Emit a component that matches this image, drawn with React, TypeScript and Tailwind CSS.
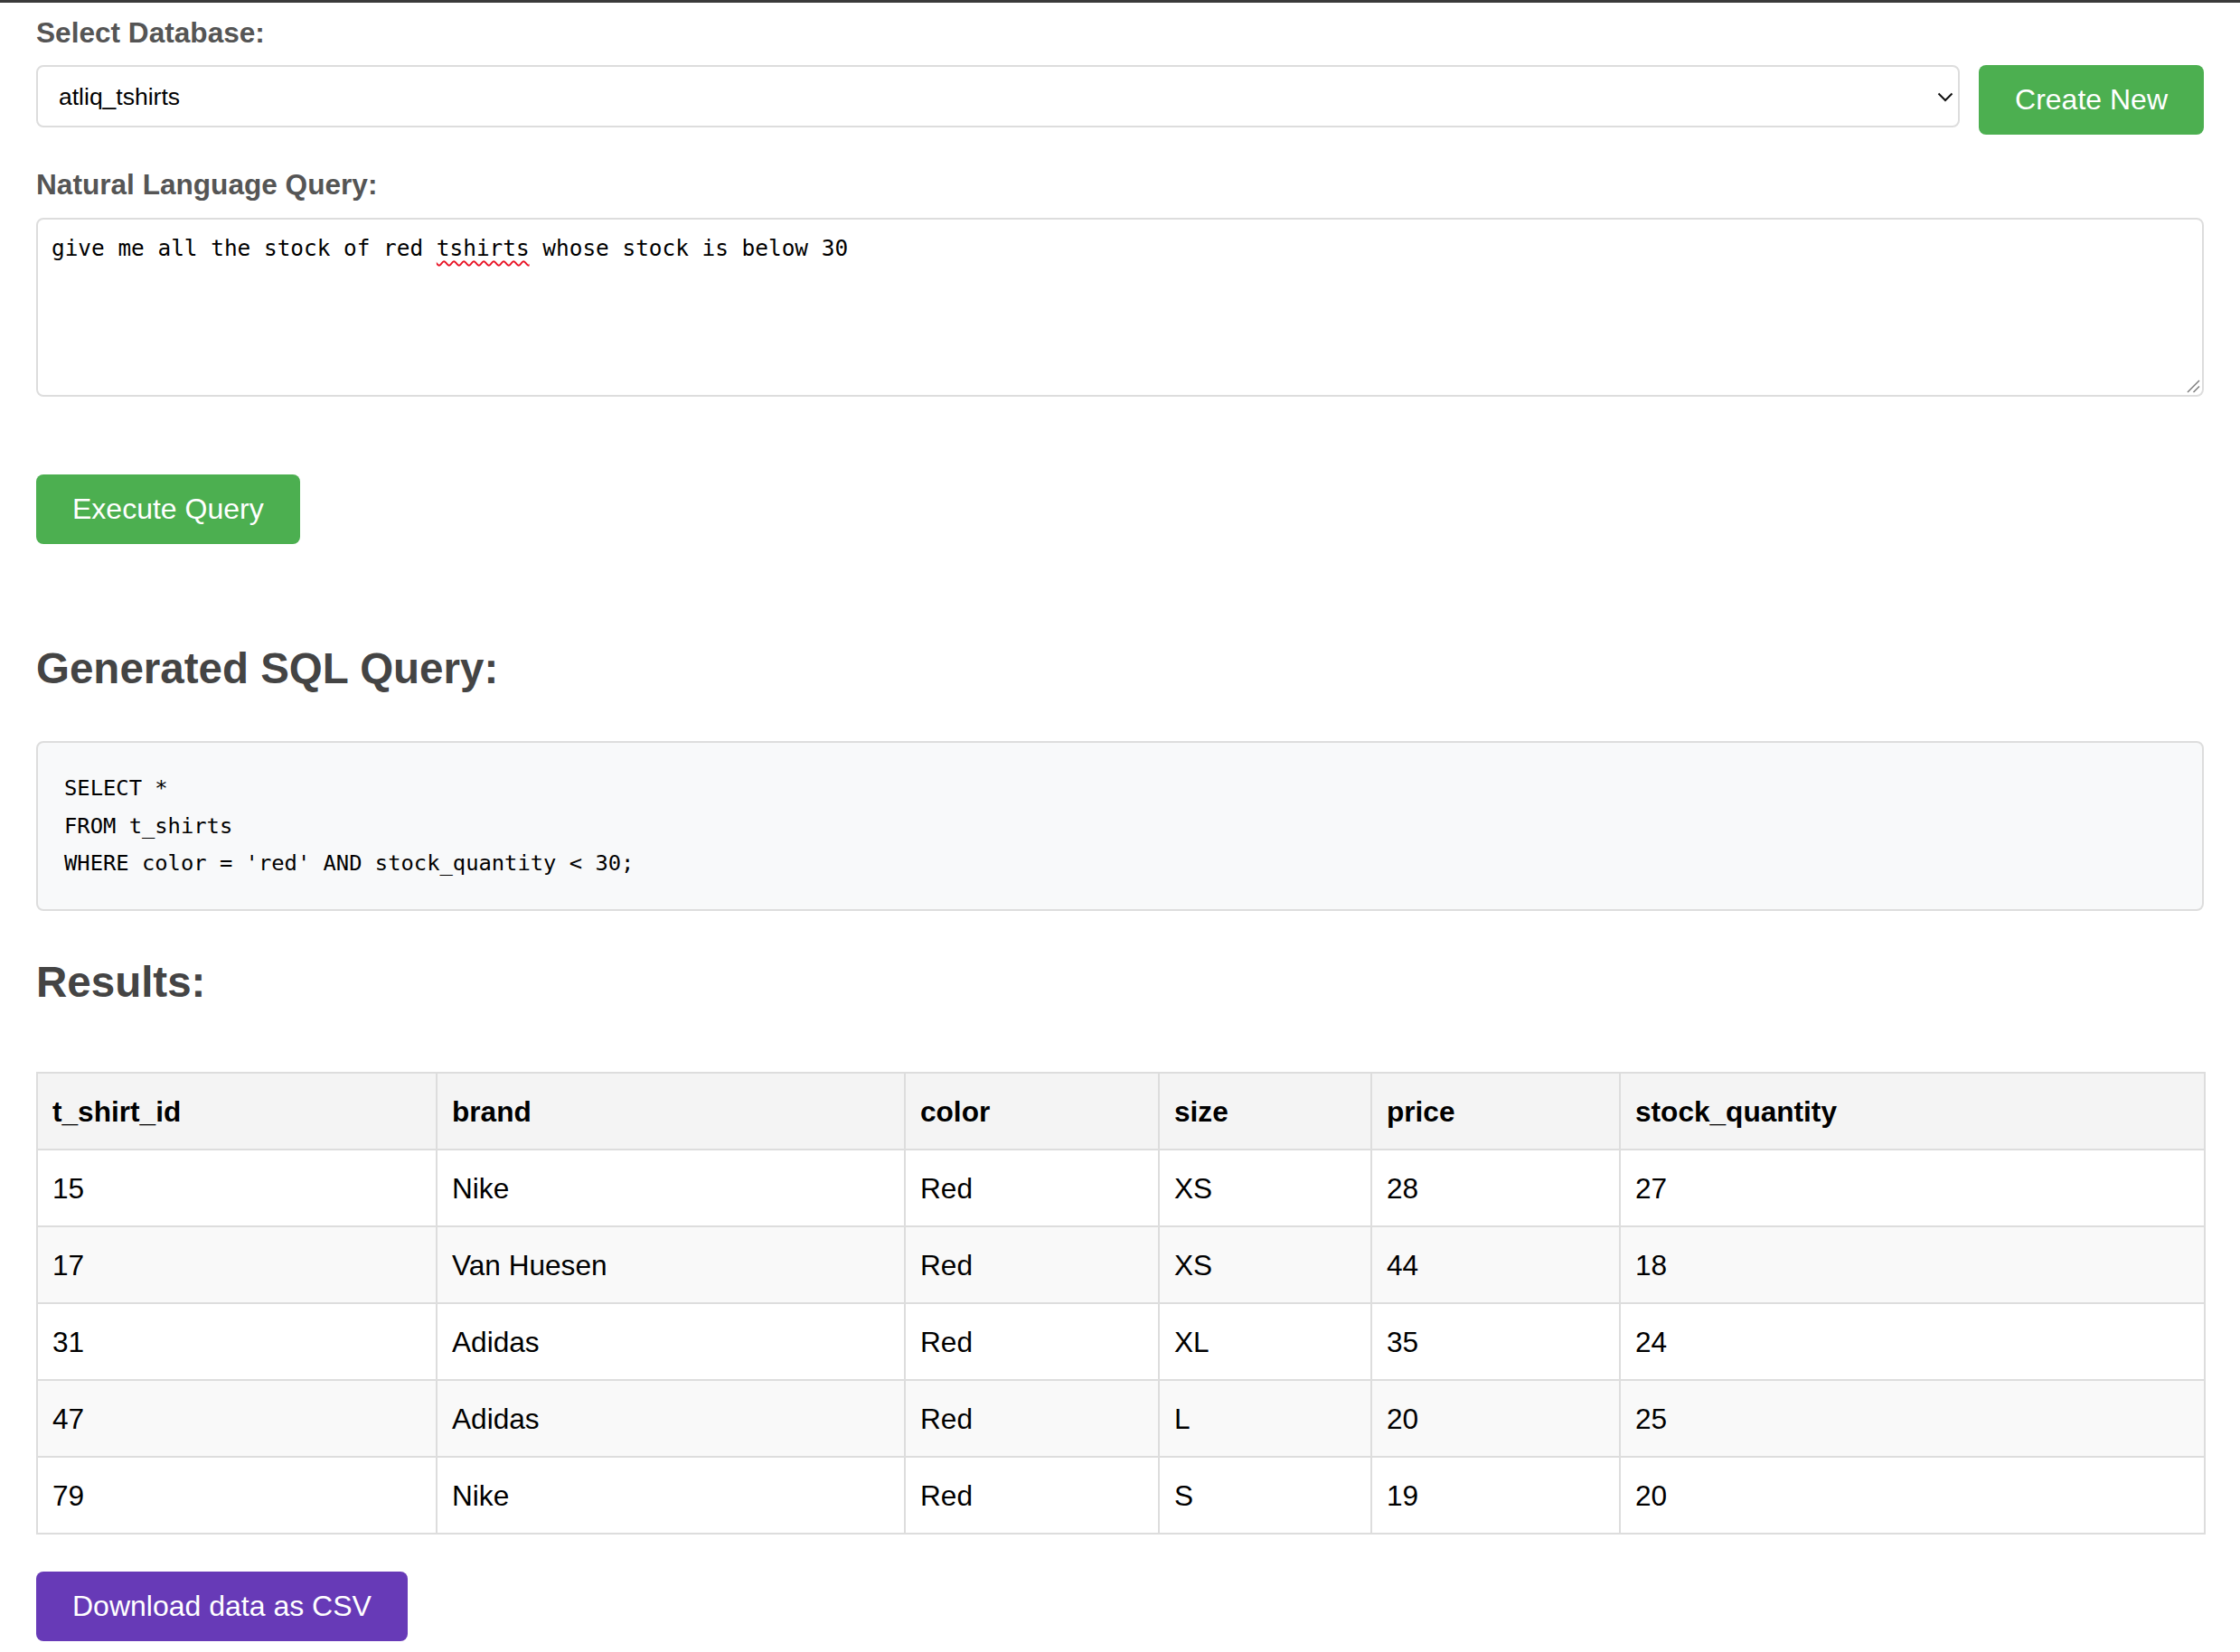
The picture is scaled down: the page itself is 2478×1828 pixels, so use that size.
import React from "react";

interface TShirtRow {
  t_shirt_id: number;
  brand: string;
  color: string;
  size: string;
  price: number;
  stock_quantity: number;
}

const rows: TShirtRow[] = [
  { t_shirt_id: 15, brand: "Nike", color: "Red", size: "XS", price: 28, stock_quantity: 27 },
  { t_shirt_id: 17, brand: "Van Huesen", color: "Red", size: "XS", price: 44, stock_quantity: 18 },
  { t_shirt_id: 31, brand: "Adidas", color: "Red", size: "XL", price: 35, stock_quantity: 24 },
  { t_shirt_id: 47, brand: "Adidas", color: "Red", size: "L", price: 20, stock_quantity: 25 },
  { t_shirt_id: 79, brand: "Nike", color: "Red", size: "S", price: 19, stock_quantity: 20 },
];

const columns: (keyof TShirtRow)[] = [
  "t_shirt_id",
  "brand",
  "color",
  "size",
  "price",
  "stock_quantity",
];

const colWidths = ["w-[442px]", "w-[518px]", "w-[281px]", "w-[235px]", "w-[275px]", "w-[647px]"];

const sqlLines = ["SELECT *", "FROM t_shirts", "WHERE color = 'red' AND stock_quantity < 30;"];

const App: React.FC = () => {
  return (
    <div className="min-h-screen bg-white font-['Liberation_Sans',Arial,sans-serif] text-black">
      <div className="h-[3px] bg-[#3a3a3a]" />

      <div className="px-[40px] pb-[14px]">
        {/* Database picker */}
        <label className="mt-[15px] block text-[31.6px] font-bold leading-[37px] text-[#555555]">
          Select Database:
        </label>
        <div className="mt-[17px] flex items-start gap-[21px]">
          <div className="relative flex-1">
            <select
              defaultValue="atliq_tshirts"
              className="h-[69px] w-full appearance-none rounded-[8px] border-2 border-[#dddddd] bg-white pl-[23px] pt-[2px] text-[26.5px] text-black outline-none"
            >
              <option value="atliq_tshirts">atliq_tshirts</option>
            </select>
            <svg
              className="pointer-events-none absolute right-[7px] top-[30px]"
              width="18"
              height="11"
              viewBox="0 0 18 11"
              fill="none"
            >
              <path d="M1.5 1.5 L9 9 L16.5 1.5" stroke="#111111" strokeWidth="2" />
            </svg>
          </div>
          <button className="h-[77px] rounded-[8px] bg-[#4caf50] px-[40px] text-[32px] leading-[37px] text-white">
            Create New
          </button>
        </div>

        {/* Query input */}
        <label className="mt-[37px] block text-[31.6px] font-bold leading-[37px] text-[#555555]">
          Natural Language Query:
        </label>
        <div className="relative mt-[18px] h-[198px] rounded-[8px] border-2 border-[#dddddd] bg-white px-[15px] pt-[18px] font-['DejaVu_Sans_Mono',monospace] text-[24.4px] leading-[28.4px] text-black">
          give me all the stock of red{" "}
          <span className="underline decoration-[#e81123] decoration-wavy decoration-2 underline-offset-[5px]">
            tshirts
          </span>{" "}
          whose stock is below 30
          <svg
            className="absolute bottom-[2px] right-[2px]"
            width="15"
            height="15"
            viewBox="0 0 15 15"
            fill="none"
          >
            <path d="M14 1 L1 14" stroke="#7a7a7a" strokeWidth="1.5" />
            <path d="M14 7.5 L7.5 14" stroke="#7a7a7a" strokeWidth="1.5" />
          </svg>
        </div>

        <button className="mt-[86px] h-[77px] rounded-[8px] bg-[#4caf50] px-[40px] text-[32px] leading-[37px] text-white">
          Execute Query
        </button>

        {/* Generated SQL */}
        <h2 className="mt-[110px] text-[47.5px] font-bold leading-[55px] text-[#444444]">
          Generated SQL Query:
        </h2>
        <pre className="mt-[53px] rounded-[8px] border-2 border-[#dddddd] bg-[#f8f9fa] px-[29px] pb-[29px] pt-[30px] font-['DejaVu_Sans_Mono',monospace] text-[23.8px] leading-[41.5px] text-black">
          {sqlLines.map((line) => (
            <div key={line}>{line}</div>
          ))}
        </pre>

        {/* Results table */}
        <h2 className="mt-[51px] text-[47.5px] font-bold leading-[55px] text-[#444444]">
          Results:
        </h2>
        <table className="mt-[72px] w-full table-fixed border-collapse border-2 border-[#dddddd] text-[31.6px]">
          <colgroup>
            {colWidths.map((w, i) => (
              <col key={i} className={w} />
            ))}
          </colgroup>
          <thead>
            <tr className="bg-[#f4f4f4]">
              {columns.map((col) => (
                <th
                  key={col}
                  className="h-[85px] border-2 border-[#dddddd] px-[16px] pt-[2px] text-left align-middle font-bold leading-[36px]"
                >
                  {col}
                </th>
              ))}
            </tr>
          </thead>
          <tbody>
            {rows.map((row, idx) => (
              <tr key={row.t_shirt_id} className={idx % 2 === 1 ? "bg-[#f9f9f9]" : "bg-white"}>
                {columns.map((col) => (
                  <td
                    key={col}
                    className="h-[85px] border-2 border-[#dddddd] px-[16px] pt-[1px] align-middle leading-[36px]"
                  >
                    {row[col]}
                  </td>
                ))}
              </tr>
            ))}
          </tbody>
        </table>

        <button className="mt-[41px] h-[77px] rounded-[8px] bg-[#673ab7] px-[40px] text-[32px] leading-[37px] text-white">
          Download data as CSV
        </button>
      </div>
    </div>
  );
};

export default App;
